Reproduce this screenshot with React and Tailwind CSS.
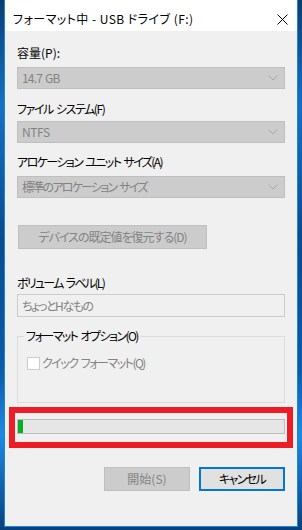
import React from "react";

function Chevron() {
  return (
    <svg width="10" height="6" viewBox="0 0 10 6" className="shrink-0">
      <polyline points="0.5,0.5 5,5 9.5,0.5" fill="none" stroke="#a6a6a6" strokeWidth="1" />
    </svg>
  );
}

function Combo({ children }) {
  return (
    <div className="w-[268px] h-[22px] bg-[#cccccc] border border-[#bfbfbf] flex items-center pl-[4px] pr-[6px] justify-between">
      {children}
      <Chevron />
    </div>
  );
}

export default function App() {
  return (
    <div className="w-[302px] h-[530px] overflow-hidden pl-[4px] bg-[linear-gradient(180deg,#0a3c76_0%,#1670c2_20%,#0b4a8e_45%,#0c5aa8_70%,#1d8ae6_82%,#0a3f7c_100%)] font-['Noto_Sans_CJK_JP','Noto_Sans',sans-serif] [font-feature-settings:'palt'] text-[12px] leading-[16px] text-black">
      <div className="relative w-[294px] h-[527px] border-x border-b border-[#1a86dc] flex flex-col">
        {/* Title bar */}
        <div className="h-[31px] bg-white flex items-start justify-between pl-[8px] pr-[9px] shrink-0">
          <span className="mt-[11px] leading-[16px] tracking-[0.45px]">フォーマット中 - USB ドライブ (F:)</span>
          <svg width="11" height="11" viewBox="0 0 11 11" className="mt-[14px]">
            <line x1="0.5" y1="0.5" x2="10.5" y2="10.5" stroke="#000" strokeWidth="1" />
            <line x1="10.5" y1="0.5" x2="0.5" y2="10.5" stroke="#000" strokeWidth="1" />
          </svg>
        </div>

        {/* Content */}
        <div className="flex-1 bg-[#f0f0f0] pl-[12px] flex flex-col">
          <div className="mt-[14px] h-[16px]">容量(P):</div>
          <div className="mt-[6px]">
            <Combo><span className="text-[#838383] tracking-[-0.8px] [word-spacing:1px]">14.7 GB</span></Combo>
          </div>

          <div className="mt-[12px] h-[16px] tracking-[-1.45px] [word-spacing:2px]">ファイル システム(F)</div>
          <div className="mt-[4px]">
            <Combo><span className="text-[#838383] tracking-[-0.4px]">NTFS</span></Combo>
          </div>

          <div className="mt-[11px] h-[16px] tracking-[-1.6px] [word-spacing:2px]">アロケーション ユニット サイズ(A)</div>
          <div className="mt-[6px]">
            <Combo><span className="text-[#838383] tracking-[-1.75px] [word-spacing:2px]">標準のアロケーション サイズ</span></Combo>
          </div>

          <div className="mt-[27px] ml-[1px] w-[189px] h-[24px] bg-[#cccccc] border border-[#bfbfbf] flex items-center justify-center text-[#838383] tracking-[-1px]">
            デバイスの既定値を復元する(D)
          </div>

          <div className="mt-[26px] h-[16px] tracking-[-1.7px] [word-spacing:2px]">ボリューム ラベル(L)</div>
          <div className="mt-[3px] w-[268px] h-[23px] border border-[#cccccc] bg-[#f0f0f0] flex items-center pl-[4px] text-[#838383] tracking-[-1.5px]">
            ちょっとHなもの
          </div>

          <fieldset className="mt-[11px] w-[268px] h-[75px] border border-[#dcdcdc]">
            <legend className="ml-[6px] px-[2px] leading-[16px] tracking-[-1.55px] [word-spacing:2px]">フォーマット オプション(O)</legend>
            <div className="mt-[11px] pl-[9px] flex items-center gap-[2px] h-[16px]">
              <div className="w-[13px] h-[13px] bg-white border border-[#cccccc]" />
              <span className="text-[#838383] tracking-[-1.5px] [word-spacing:2px]">クイック フォーマット(Q)</span>
            </div>
          </fieldset>

          <div className="mt-[16px] w-[268px] h-[15px] bg-[#e6e6e6] border border-[#bcbcbc] flex">
            <div className="w-[5px] h-full bg-[#06b025]" />
          </div>

          <div className="mt-[33px] w-[268px] flex justify-end gap-[9px]">
            <div className="w-[86px] h-[24px] bg-[#cccccc] border border-[#bfbfbf] flex items-center justify-center text-[#838383]">
              開始(S)
            </div>
            <div className="w-[86px] h-[24px] bg-[#e1e1e1] border-2 border-[#0078d7] flex items-center justify-center tracking-[-1.6px]">
              キャンセル
            </div>
          </div>
        </div>

        {/* Red annotation overlay */}
        <div className="absolute left-[4px] top-[407px] w-[284px] h-[41px] border-[6px] border-[#ee1c24] pointer-events-none" />
      </div>
    </div>
  );
}
